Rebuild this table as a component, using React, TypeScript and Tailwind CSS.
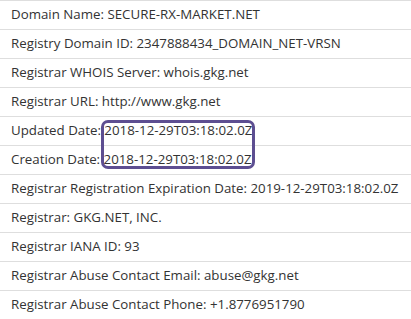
const rows = [
  'Domain Name: SECURE-RX-MARKET.NET',
  'Registry Domain ID: 2347888434_DOMAIN_NET-VRSN',
  'Registrar WHOIS Server: whois.gkg.net',
  'Registrar URL: http://www.gkg.net',
  'Updated Date: 2018-12-29T03:18:02.0Z',
  'Creation Date: 2018-12-29T03:18:02.0Z',
  'Registrar Registration Expiration Date: 2019-12-29T03:18:02.0Z',
  'Registrar: GKG.NET, INC.',
  'Registrar IANA ID: 93',
  'Registrar Abuse Contact Email: abuse@gkg.net',
  'Registrar Abuse Contact Phone: +1.8776951790',
];

export default function App() {
  return (
    <div className="relative w-[411px] h-[319px] overflow-hidden bg-white font-['Open_Sans',sans-serif] text-[13.3px] text-[#333]">
      {rows.map((r) => (
        <div key={r} className="h-[29px] border-t border-[#dedede] pl-[11px] flex items-center">
          {r}
        </div>
      ))}
      <div className="absolute left-[101px] top-[120px] w-[154px] h-[49px] rounded-[7px] border-[3px] border-[#5d4e91]" />
    </div>
  );
}
